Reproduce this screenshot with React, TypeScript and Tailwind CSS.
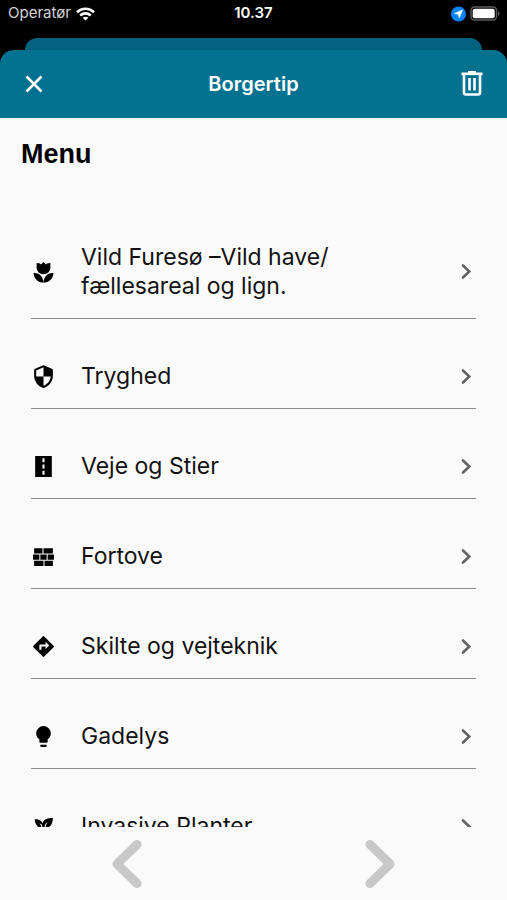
import React from "react";

const ICONS = {
  tulip:
    "M2.4 12.600C3 18 6.800 21.600 12 21.600C11.600 16 8 12 2.4 12.600M12 21.600C17.2 21.600 21 18 21.600 12.600C16 12 12.400 16 12 21.600M18.600 2.800V8A6.600 5.600 0 0 1 12 13.600A6.600 5.600 0 0 1 5.400 8V2.800C6.4 2.800 7.47 3 8.16 3.2L9.61 4.2L12 1.800L14.39 4.2L15.84 3.2C16.53 3 17.6 2.800 18.600 2.800Z",
  shield:
    "M12 12H19C18.5 16 15.7 19.6 12 20.9V12H5V6.3L12 3.2ZM12.8 1.4Q12 1 11.2 1.4L4 4.6Q3 5 3 6V11C3 16.5 6.8 21.7 12 23C17.2 21.7 21 16.5 21 11V6Q21 5 20 4.6Z",
  road: "M11 16H13V20H11ZM11 10H13V14H11ZM11 4H13V8H11ZM4 22H20V2H4Z",
  wall: "M3 16H12V21H3V16M2 10H8V15H2V10M9 10H15V15H9V10M16 10H22V15H16V10M13 16H21V21H13V16M3 4H11V9H3V4M12 4H21V9H12V4Z",
  directions:
    "M14 14.5V12H10V15H8V11A1 1 0 0 1 9 10H14V7.5L17.5 11M21.71 11.29L12.71 2.29C12.31 1.9 11.68 1.91 11.29 2.29L2.29 11.29C1.9 11.68 1.9 12.32 2.29 12.71L11.29 21.71C11.68 22.09 12.31 22.1 12.71 21.71L21.71 12.71C22.1 12.32 22.1 11.68 21.71 11.29Z",
  bulb: "M12 2A7 7 0 0 0 5 9C5 11.38 6.19 13.47 8 14.74V17A1 1 0 0 0 9 18H15A1 1 0 0 0 16 17V14.74C17.81 13.47 19 11.38 19 9A7 7 0 0 0 12 2M9 21A1 1 0 0 0 10 22H14A1 1 0 0 0 15 21V20H9V21Z",
  sprout:
    "M2 22V20C2 20 7 18 12 18C17 18 22 20 22 20V22H2M11.3 9.1C10.1 4.600 3.500 5.100 3.500 5.100C3.500 5.100 4.2 13.9 9.9 12.7C9.5 9.8 8 9 8 9C10.8 9 11 12.4 11 12.4V17C11.3 17 11.7 17 12 17C12.3 17 12.7 17 13 17V12.8C13 12.8 13 8.9 16 7.9C16 7.9 14 10.9 14 12.9C21 13.6 21 4 21 4C21 4 12.1 3 11.3 9.1Z",
};

const ITEMS: { icon: keyof typeof ICONS; label: string }[] = [
  { icon: "tulip", label: "Vild Furesø –Vild have/ fællesareal og lign." },
  { icon: "shield", label: "Tryghed" },
  { icon: "road", label: "Veje og Stier" },
  { icon: "wall", label: "Fortove" },
  { icon: "directions", label: "Skilte og vejteknik" },
  { icon: "bulb", label: "Gadelys" },
  { icon: "sprout", label: "Invasive Planter" },
];

function StatusBar() {
  return (
    <div className="grid h-[38px] shrink-0 grid-cols-3 px-[7px] pb-[11px] text-[15px] text-white">
      <div className="flex items-center gap-[5px] pl-px text-[#d4d4d4]">
        <span>Operatør</span>
        <svg width="19" height="14" viewBox="0 0 19 14" fill="none" stroke="white" strokeWidth="2.6" aria-hidden="true">
          <path d="M1 5.2C5.8 .6 13.2 .6 18 5.2" />
          <path d="M4.2 8.5C7.2 5.7 11.8 5.7 14.8 8.5" />
          <path d="M9.5 13.6L6.6 10.7C8.2 9.3 10.8 9.3 12.4 10.7Z" fill="white" stroke="none" />
        </svg>
      </div>
      <div className="flex items-center justify-center font-semibold">10.37</div>
      <div className="flex items-center justify-end gap-1">
        <svg width="16" height="16" viewBox="0 0 16 16" aria-hidden="true">
          <circle cx="8.500" cy="8" r="7.5" fill="#0a84ff" />
          <path d="M12.500 4L9.300 12L8.300 8.300L4.500 7.4Z" fill="white" stroke="white" strokeWidth=".6" strokeLinejoin="round" />
        </svg>
        <svg width="30" height="15" viewBox="0 0 30 15" aria-hidden="true">
          <rect x="1" y="1" width="25.500" height="13" rx="3.500" fill="none" stroke="#5c5c5c" strokeWidth="1.400" />
          <rect x="2.700" y="2.700" width="22" height="9.600" rx="2" fill="white" />
          <path d="M28 5.200C30 6 30 9 28 9.800Z" fill="#5c5c5c" />
        </svg>
      </div>
    </div>
  );
}

function Header() {
  return (
    <header className="flex h-[68px] shrink-0 items-center justify-between rounded-t-[14px] bg-[#037290] px-[22px] text-white">
      <button type="button" aria-label="Luk" className="flex w-6 justify-center">
        <svg width="24" height="24" viewBox="0 0 24 24" fill="none" stroke="currentColor" strokeWidth="2.5">
          <path d="M4.500 4.500L19.500 19.500M19.500 4.500L4.500 19.500" />
        </svg>
      </button>
      <h1 className="text-[20px] leading-6 font-semibold">Borgertip</h1>
      <button type="button" aria-label="Slet" className="flex w-6 justify-center">
        <svg width="24" height="28" viewBox="0 0 24 28" fill="none" stroke="currentColor" strokeWidth="2.6">
          <path d="M.500 3.800H21.500" />
          <path d="M7 2H15" strokeWidth="2" />
          <path d="M3 4V22.500Q3 24.500 5 24.500H17Q19 24.500 19 22.500V4" />
          <path d="M8.500 8V20.500M13.500 8V20.500" strokeWidth="2.600" />
        </svg>
      </button>
    </header>
  );
}

function MenuRow({ icon, label }: { icon: keyof typeof ICONS; label: string }) {
  return (
    <li className="border-b border-[#8c8c8c] pt-[43px] pb-[17px]">
      <button type="button" className="flex w-full items-center text-left">
        <svg className="shrink-0" width="25" height="25" viewBox="0 0 24 24" fill="black" fillRule="evenodd" aria-hidden="true">
          <path d={ICONS[icon]} />
        </svg>
        <span className="ml-[25px] max-w-[280px] flex-1 text-[23px] leading-[29px] text-[#111]">{label}</span>
        <svg
          className="ml-auto shrink-0"
          width="20"
          height="20"
          viewBox="0 0 20 20"
          fill="none"
          stroke="#636363"
          strokeWidth="2.6"
          strokeLinecap="round"
          aria-hidden="true"
        >
          <path d="M7 3.500L13.300 9.500L7 15.500" />
        </svg>
      </button>
    </li>
  );
}

function PagerButton({ label, path }: { label: string; path: string }) {
  return (
    <button type="button" aria-label={label} className="flex flex-1 items-center justify-center">
      <svg
        width="32"
        height="50"
        viewBox="0 0 32 50"
        fill="none"
        stroke="#c8c8c8"
        strokeWidth="9"
        strokeLinecap="round"
        strokeLinejoin="round"
      >
        <path d={path} />
      </svg>
    </button>
  );
}

export default function App() {
  return (
    <div className="flex h-screen flex-col bg-black font-['Inter','Liberation_Sans',sans-serif]">
      <StatusBar />
      <div className="mx-[25px] h-3 shrink-0 rounded-t-[12px] bg-[#046280]" />
      <Header />
      <main className="flex min-h-0 flex-1 flex-col bg-[#fafafa]">
        <div className="min-h-0 flex-1 overflow-y-auto [scrollbar-width:none]">
          <h2 className="px-[21px] pt-5 font-['Liberation_Sans',sans-serif] text-[27px] leading-8 font-bold text-black">
            Menu
          </h2>
          <ul className="px-[31px] pt-[30px]">
            {ITEMS.map((item) => (
              <MenuRow key={item.label} icon={item.icon} label={item.label} />
            ))}
          </ul>
        </div>
        <nav aria-label="Sider" className="flex h-[73px] shrink-0">
          <PagerButton label="Forrige" path="M26 5.500L6 25L26 44.500" />
          <PagerButton label="Næste" path="M6 5.500L26 25L6 44.500" />
        </nav>
      </main>
    </div>
  );
}
